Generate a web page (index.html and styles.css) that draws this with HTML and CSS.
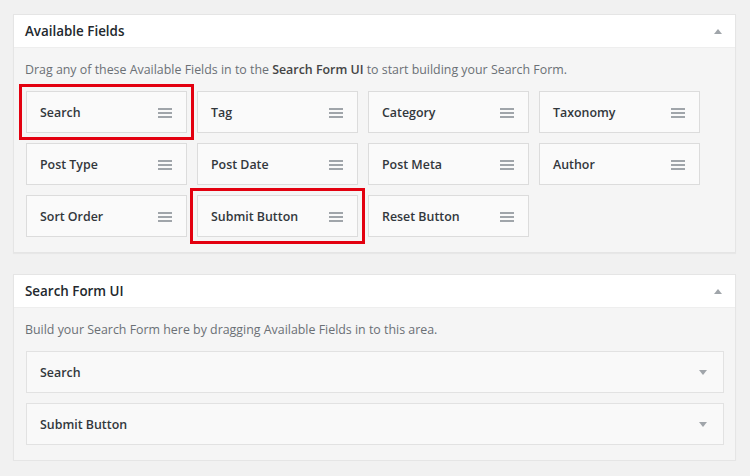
FILE: index.html
```html
<!DOCTYPE html>
<html>
<head>
<meta charset="utf-8">
<link rel="stylesheet" href="styles.css">
</head>
<body>
<div class="page">
  <section class="panel">
    <div class="panel-head">
      <h2>Available Fields</h2>
      <span class="tri up"></span>
    </div>
    <div class="panel-body">
      <p class="desc">Drag any of these Available Fields in to the <b>Search Form UI</b> to start building your Search Form.</p>
      <div class="grid">
        <div class="tile hl"><span>Search</span><i class="ham"></i></div>
        <div class="tile"><span>Tag</span><i class="ham"></i></div>
        <div class="tile"><span>Category</span><i class="ham"></i></div>
        <div class="tile"><span>Taxonomy</span><i class="ham"></i></div>
        <div class="tile"><span>Post Type</span><i class="ham"></i></div>
        <div class="tile"><span>Post Date</span><i class="ham"></i></div>
        <div class="tile"><span>Post Meta</span><i class="ham"></i></div>
        <div class="tile"><span>Author</span><i class="ham"></i></div>
        <div class="tile"><span>Sort Order</span><i class="ham"></i></div>
        <div class="tile hl"><span>Submit Button</span><i class="ham"></i></div>
        <div class="tile"><span>Reset Button</span><i class="ham"></i></div>
      </div>
    </div>
  </section>
  <section class="panel">
    <div class="panel-head">
      <h2>Search Form UI</h2>
      <span class="tri up"></span>
    </div>
    <div class="panel-body">
      <p class="desc">Build your Search Form here by dragging Available Fields in to this area.</p>
      <div class="rows">
        <div class="row"><span>Search</span><span class="tri down"></span></div>
        <div class="row"><span>Submit Button</span><span class="tri down"></span></div>
      </div>
    </div>
  </section>
</div>
</body>
</html>
```
FILE: styles.css
```css
html, body {
  margin: 0;
  padding: 0;
  background: #f1f1f1;
  font-family: "Open Sans", "Liberation Sans", sans-serif;
}
.page {
  padding: 14px 14px 0 13px;
  display: flex;
  flex-direction: column;
  gap: 21px;
}
.panel {
  width: 721px;
  border: 1px solid #e5e5e5;
  background: #f5f5f5;
  box-shadow: 0 1px 1px rgba(0,0,0,0.04);
}
.panel-head {
  height: 32px;
  background: #fff;
  border-bottom: 1px solid #eeeeee;
  display: flex;
  align-items: center;
  justify-content: space-between;
  padding: 0 13px 0 11px;
}
.panel-head h2 {
  margin: 0;
  font-size: 13.4px;
  font-weight: 600;
  color: #23282d;
}
.tri {
  width: 0;
  height: 0;
  border-left: 4px solid transparent;
  border-right: 4px solid transparent;
}
.tri.up { border-bottom: 5px solid #a0a5aa; }
.tri.down { border-top: 5px solid #a0a5aa; }
.panel-body {
  padding: 13px 11px 15px 12px;
}
.desc {
  margin: 0 0 12px -1px;
  font-size: 12.4px;
  line-height: 18px;
  color: #6b7075;
}
.desc b {
  font-weight: 600;
  color: #444;
}
.grid {
  display: grid;
  grid-template-columns: repeat(4, 161px);
  column-gap: 10px;
  row-gap: 10px;
}
.tile {
  height: 40px;
  border: 1px solid #dcdcdc;
  background: #fafafa;
  display: flex;
  align-items: center;
  justify-content: space-between;
  padding: 0 14px 0 13px;
  font-size: 12.4px;
  font-weight: 600;
  color: #32373c;
}
.tile.hl {
  outline: 3px solid #e3000f;
  outline-offset: 4px;
}
.ham {
  width: 14px;
  height: 10px;
  background: linear-gradient(#a0a5aa 0 2px, transparent 2px 4px, #a0a5aa 4px 6px, transparent 6px 8px, #a0a5aa 8px 10px);
  margin-top: 1px;
}
.rows {
  display: flex;
  flex-direction: column;
  gap: 10px;
}
.row {
  height: 40px;
  border: 1px solid #e2e2e2;
  background: #f9f9f9;
  display: flex;
  align-items: center;
  justify-content: space-between;
  padding: 0 16px 0 13px;
  font-size: 12.4px;
  font-weight: 600;
  color: #32373c;
}
```
